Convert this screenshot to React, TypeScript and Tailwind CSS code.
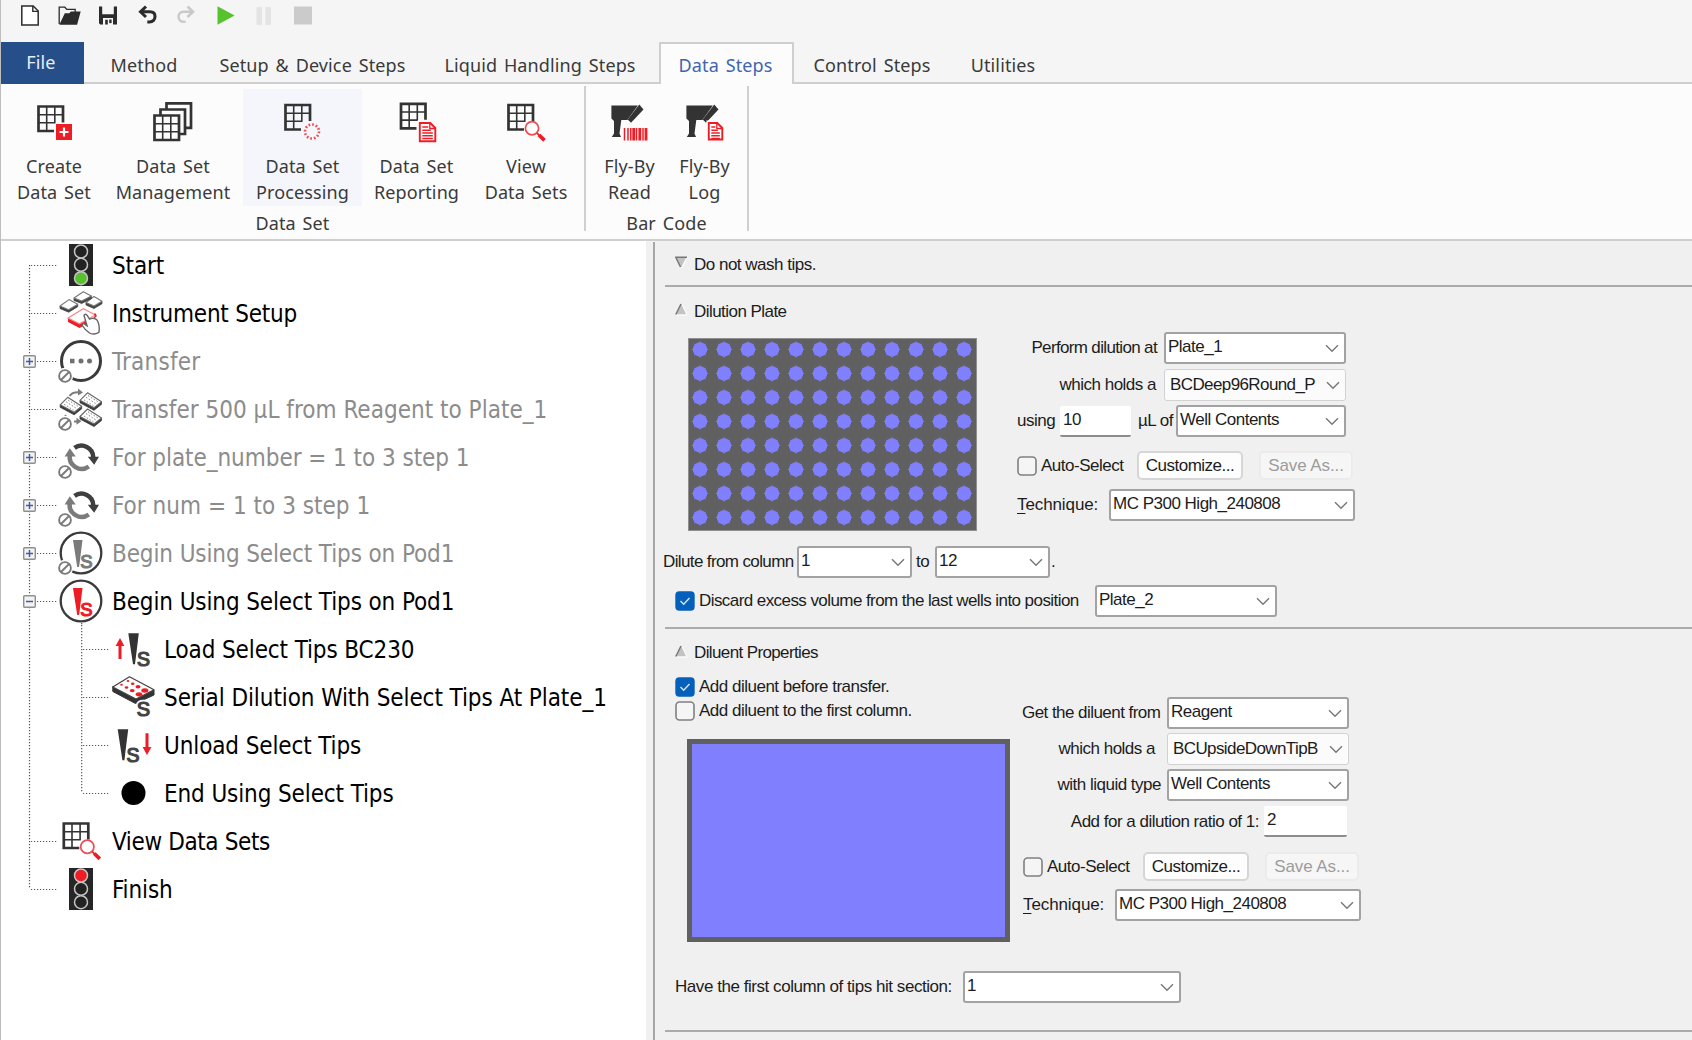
import React from "react";

type Kids = { children?: React.ReactNode };

/* ---------- quick access toolbar ---------- */

const QuickIcon = ({ children }: Kids) => (
  <svg width="24" height="24" viewBox="0 0 24 24" fill="none">
    {children}
  </svg>
);

function QuickBar() {
  return (
    <div className="flex h-[42px] items-start gap-[15px] pl-[17px] pt-[3px]">
      <QuickIcon>
        <path d="M3.8 3h11.4l5 5v14H3.8z" stroke="#2b2b2b" strokeWidth="1.5" fill="#fff" />
        <path d="M14.8 3v5.4h5.4" stroke="#2b2b2b" strokeWidth="1.4" />
      </QuickIcon>
      <QuickIcon>
        <path d="M2.2 21V4.2h5.6l2 2.2h8.4v3.2" stroke="#2b2b2b" strokeWidth="1.3" />
        <path d="M7.800 10.2h4.6l1.4-1.7h9.9L20.100 21.7H2.300z" fill="#2b2b2b" />
      </QuickIcon>
      <QuickIcon>
        <path fillRule="evenodd" fill="#2b2b2b" d="M3 3.5h18v18H4.2L3 20.3zM6.2 3.5v7.8h11.6V3.5zM7 15v6.5h2.2V16.8h2.6v4.7H17V15z" />
        <path d="M13.2 16.5h2.4v3.6h-2.4z" fill="#2b2b2b" />
      </QuickIcon>
      <QuickIcon>
        <path d="M11 3.5 5.500 8.8l5.5 5.2" stroke="#2b2b2b" strokeWidth="3" />
        <path d="M6 8.8h9c3.5 0 5 2.2 5 4.8 0 3-2 5.3-5.5 5.3h-2.2" stroke="#2b2b2b" strokeWidth="3" />
      </QuickIcon>
      <QuickIcon>
        <path d="M13.5 3.5 19 8.8 13.5 14" stroke="#c9c9c9" strokeWidth="2.6" />
        <path d="M18.5 8.8h-9c-3.500 0-5 2.200-5 4.800 0 3 2 5.300 5.500 5.300h1.700" stroke="#c9c9c9" strokeWidth="2.4" />
      </QuickIcon>
      <QuickIcon>
        <path d="M4.5 3.300v18.400L21.600 12.500z" fill="#57c22d" />
      </QuickIcon>
      <QuickIcon>
        <path d="M4.500 4H10v18H4.500zM13.500 4H19v18h-5.500z" fill="#e4e4e4" />
      </QuickIcon>
      <QuickIcon>
        <path d="M3 3.500h18v18H3z" fill="#cbcbcb" />
      </QuickIcon>
    </div>
  );
}

/* ---------- tabs ---------- */

function Tabs() {
  const rib = "flex h-[42px] items-center justify-center border-b-2 border-[#cfcfcf] pt-[7px] whitespace-nowrap";
  return (
    <div className="flex h-[42px] text-[18px] tracking-[0.12px] [word-spacing:2px] text-[#3a3a3a]">
      <div className="flex w-[83px] items-center justify-center bg-[#264f89] pb-0.5 pr-[3px] text-[#e8eef8]">File</div>
      <div className={`${rib} w-[120px]`}>Method</div>
      <div className={`${rib} w-[217px]`}>Setup &amp; Device Steps</div>
      <div className={`${rib} w-[238px]`}>Liquid Handling Steps</div>
      <div className="flex h-[42px] w-[135px] items-center justify-center border-x-2 border-t-2 border-[#cfcfcf] bg-[#fcfcfc] pr-[2px] pt-[3px] whitespace-nowrap text-[#3f65b0]">
        Data Steps
      </div>
      <div className={`${rib} w-[156px]`}>Control Steps</div>
      <div className={`${rib} w-[106px]`}>Utilities</div>
      <div className={`${rib} grow`} />
    </div>
  );
}

/* ---------- ribbon icons ---------- */

const RED = "#ee1c25";

const Table = ({ x = 0, y = 0 }: { x?: number; y?: number }) => (
  <g transform={`translate(${x} ${y})`} stroke="#333" fill="none">
    <path d="M25.500 17V1H1v24.500h15.500" strokeWidth="2.700" />
    <path d="M9.200 1v24M17.300 1v16.500M1 9.200h24.500M1 17.300h17" strokeWidth="1.600" />
  </g>
);

const StackedTables = () => (
  <g stroke="#333" strokeWidth="2.700" fill="#fcfcfc">
    <path d="M13.500 1.300H38v24.500H13.500z" />
    <path d="M7.500 7.500H32V32H7.500z" />
    <path d="M1.500 13.500H26V38H1.500z" />
    <path d="M9.700 13.500V38M17.800 13.500V38M1.500 21.700H26M1.500 29.800H26" strokeWidth="1.600" />
  </g>
);

const Lens = () => (
  <>
    <circle cx="26" cy="26.300" r="6.600" fill="#fff" stroke="#f04a50" strokeWidth="1.700" />
    <path d="m31 31.200 2.500 2.500" stroke={RED} strokeWidth="1.700" />
    <path d="m33 33 5.500 5.300" stroke={RED} strokeWidth="3.800" />
  </>
);

const Sheet = ({ x, y, w, h }: { x: number; y: number; w: number; h: number }) => (
  <g transform={`translate(${x} ${y})`} stroke={RED} fill="none">
    <path d={`M0 0h${w - 5}l5 5v${h - 5}H0z`} fill="#fff" strokeWidth="1.900" />
    <path d={`M${w - 5.5} 0v5.500h5.500`} strokeWidth="1.300" />
    <path d={`M2.500 4h${w - 9.5}M2.500 7.200h${w - 7}M2.500 10h${w - 5}M2.500 12.800h${w - 5}M2.500 15.500h${w - 5}`} strokeWidth="1.400" />
  </g>
);

const Scanner = () => (
  <g fill="#333">
    <path d="M1.400 3.500h26.500L17.300 18H11.300L9.500 31.500l1.500 3.500H1.800l2.200-3.500V19L1.400 16.500z" />
    <path d="m29.300 2.600 4.200 5L21 20.700l-3.300-3.100z" />
  </g>
);

const Glyph = ({ children }: Kids) => (
  <svg width="40" height="42" viewBox="0 0 40 42" className="mb-[9px] block">
    {children}
  </svg>
);

function RibbonButton({ icon, top, bottom, box }: { icon: React.ReactNode; top: string; bottom: string; box: string }) {
  return (
    <div className={`flex h-[117px] flex-col items-center pt-[13px] text-center leading-[26px] whitespace-nowrap ${box}`}>
      <Glyph>{icon}</Glyph>
      <div>{top}</div>
      <div>{bottom}</div>
    </div>
  );
}

function Ribbon() {
  return (
    <div className="flex h-[157px] border-b-2 border-[#cfcfcf] bg-[#fcfcfc] pt-[2px] text-[18px] tracking-[0.12px] [word-spacing:2px] text-[#3a3a3a]">
      <div className="flex h-[145px] w-[585px] flex-col border-r-2 border-[#d0d0d0] pt-[3px]">
        <div className="flex">
          <RibbonButton
            box="w-[106px]"
            top="Create"
            bottom="Data Set"
            icon={
              <>
                <Table x={3.5} y={3.5} />
                <path d="M22 22h16v16H22z" fill={RED} />
                <path d="M30 25.500v9M25.500 30h9" stroke="#fff" strokeWidth="2.200" />
              </>
            }
          />
          <RibbonButton box="w-[132px]" top="Data Set" bottom="Management" icon={<StackedTables />} />
          <RibbonButton
            box="ml-[4px] w-[119px] bg-[#f4f6fb]"
            top="Data Set"
            bottom="Processing"
            icon={
              <>
                <Table x={1.5} y={2} />
                <circle cx="29" cy="29.500" r="7" fill="none" stroke="#f24a50" strokeWidth="2.600" strokeDasharray="1.700 1.960" />
              </>
            }
          />
          <RibbonButton
            box="w-[109px]"
            top="Data Set"
            bottom="Reporting"
            icon={
              <>
                <Table x={3} y={0.8} />
                <path d="M20.500 18.500h20v24h-20z" fill="#fcfcfc" />
                <Sheet x={22.8} y={21} w={15.5} h={18.2} />
              </>
            }
          />
          <RibbonButton box="w-[110px]" top="View" bottom="Data Sets" icon={<><Table x={1.5} y={2} /><Lens /></>} />
        </div>
        <div className="text-center leading-[34px]">Data Set</div>
      </div>
      <div className="flex h-[145px] w-[163px] flex-col border-r-2 border-[#d0d0d0] pt-[3px]">
        <div className="flex pl-[6px]">
          <RibbonButton
            box="w-[75px]"
            top="Fly-By"
            bottom="Read"
            icon={
              <>
                <Scanner />
                <path d="M13 25h24.500v13.500H13z" fill="#fcfcfc" />
                <path d="M14.500 26v12.500M18 26v12.500M20.800 26v12.500M26.500 26v12.500M33 26v12.500" stroke={RED} strokeWidth="1.500" />
                <path d="M23.700 26v12.500M29.800 26v12.500M36 26v12.500" stroke={RED} strokeWidth="2.800" />
              </>
            }
          />
          <RibbonButton
            box="w-[75px]"
            top="Fly-By"
            bottom="Log"
            icon={
              <>
                <Scanner />
                <path d="M21.500 18.500h18v21h-18z" fill="#fcfcfc" />
                <Sheet x={23.8} y={21} w={13.5} h={16.5} />
              </>
            }
          />
        </div>
        <div className="text-center leading-[34px]">Bar Code</div>
      </div>
    </div>
  );
}

/* ---------- method tree ---------- */

const Banned = () => (
  <g>
    <circle cx="6" cy="37" r="8.200" fill="#fff" />
    <circle cx="6" cy="37" r="5.900" fill="none" stroke="#7b7b7b" strokeWidth="1.900" />
    <path d="m2 41 8-8" stroke="#7b7b7b" strokeWidth="1.900" />
  </g>
);

const TrafficLight = ({ lit }: { lit: "go" | "stop" }) => (
  <g>
    <path d="M10 1h24v42H10z" fill="#262626" />
    {[8.5, 21.8, 35.2].map((cy, i) => {
      const on = (lit === "go" && i === 2) || (lit === "stop" && i === 0);
      return (
        <circle
          key={cy}
          cx="22"
          cy={cy}
          r="6.500"
          fill={on ? (lit === "go" ? "#57c22d" : RED) : "#222"}
          stroke="#c4c4c4"
          strokeWidth="1.500"
        />
      );
    })}
  </g>
);

const Letter = ({ x, y, fill, size = 20 }: { x: number; y: number; fill: string; size?: number }) => (
  <text x={x} y={y} fontSize={size} fill={fill} stroke={fill} strokeWidth="1.200" letterSpacing="0" fontFamily="Liberation Sans, Arial, sans-serif">
    S
  </text>
);

const Tile = ({ p, side = "#444", edge = "#777" }: { p: number[]; side?: string; edge?: string }) => (
  <g strokeLinejoin="round">
    <path d={`M${p[0]} ${p[1]}V${p[1] + 2.5}L${p[6]} ${p[7] + 2.5}L${p[4]} ${p[5] + 2.5}V${p[5]}L${p[6]} ${p[7]}z`} fill={side} stroke={side} strokeWidth="0.800" />
    <path d={`M${p[0]} ${p[1]}L${p[2]} ${p[3]}L${p[4]} ${p[5]}L${p[6]} ${p[7]}z`} fill="#fff" stroke={edge} strokeWidth="1.100" />
  </g>
);

const PlateTile = ({ x, y }: { x: number; y: number }) => (
  <g transform={`translate(${x} ${y})`}>
    <Tile p={[0, 7.5, 7.5, 0, 21.5, 9, 14, 15]} side="#3a3a3a" edge="#666" />
    <path d="m6 4.500 10 6.500M4 7l9.500 6M8 2.800l10 6.200" stroke="#777" strokeWidth="0.900" strokeDasharray="1.500 1.800" />
  </g>
);

const SetupIcon = () => (
  <g>
    <Tile p={[1, 15, 10, 8.6, 18.7, 13.2, 9.7, 18.7]} />
    <Tile p={[27, 11.5, 35, 5.5, 43, 10.3, 35, 15]} />
    <Tile p={[15, 7, 24.3, 0.8, 32.3, 5, 22.7, 10]} />
    <path d="M9 27v4l11.500 6 8-4V28L20.500 32.500z" fill={RED} />
    <path d="M9 27 24.300 17.800 36.500 24 20.500 32.800z" fill="#fff" stroke="#f5878b" strokeWidth="1.200" />
    <path d="M35.500 22.500 37 25l-2 2" stroke={RED} strokeWidth="1.500" fill="none" />
    <path
      d="M25 24.500c.5-1.700 2.500-1.500 3.200 0l2.300 3.600c3-1.500 7-.6 8 1.600 1.500 3 2 8 1.500 11.500-2.500 2.200-7.500 2.200-9.500.8-2-1.300-6-5.500-7.200-7.500-.6-1.600 1.800-2.400 3.400-.6l1.400.9z"
      fill="#fff"
      stroke="#666"
      strokeWidth="1.400"
    />
  </g>
);

const LoopIcon = () => (
  <g fill="none" strokeWidth="4.500">
    <path d="M15.500 12.800A12 12 0 0 1 34.300 22.500" stroke="#3f3f3f" />
    <path d="M29.800 31.500A12 12 0 0 1 10.800 20" stroke="#7b7b7b" />
    <path d="M28.800 21.800H40l-4.800 8z" fill="#3f3f3f" />
    <path d="M5.600 21.500h11.200L10.800 13.300z" fill="#7b7b7b" />
    <Banned />
  </g>
);

const TipCircle = ({ color }: { color: string }) => (
  <g>
    <circle cx="22" cy="22" r="20.300" fill="#fff" stroke="#3b3b3b" strokeWidth="2.300" />
    <path d="M14 9h9.500l-2.600 21-.9 6h-1.800z" fill={color} />
    <Letter x={21.3} y={36.8} fill={color} size={18.5} />
  </g>
);

const Needle = ({ x }: { x: number }) => (
  <g>
    <path d={`M${x} 6.300h10.500l-3.800 31h-2z`} fill="#333" />
    <Letter x={x + 8.7} y={38.8} fill="#444" size={19.5} />
  </g>
);

const SerialIcon = () => (
  <g>
    <path d="M1.800 11.500v5L24.500 28.500l18.500-8.500v-5L25 24z" fill="#333" stroke="#333" strokeLinejoin="round" />
    <path d="M18.500 1.800 43 14.800 25 24 1.800 12z" fill="#fff" stroke="#444" strokeWidth="1.300" strokeLinejoin="round" />
    <g fill={RED}>
      <ellipse cx="17" cy="6" rx="1.300" ry="1" />
      <ellipse cx="21.700" cy="8.700" rx="1.800" ry="1.300" />
      <ellipse cx="27" cy="11.800" rx="2.500" ry="1.700" />
      <ellipse cx="33.800" cy="15.500" rx="3.500" ry="2.200" />
      <ellipse cx="10.500" cy="9.800" rx="1.300" ry="1" />
      <ellipse cx="15.500" cy="12.500" rx="1.800" ry="1.300" />
      <ellipse cx="21.200" cy="15.600" rx="2.500" ry="1.700" />
      <ellipse cx="28" cy="19.300" rx="3.300" ry="2.100" />
    </g>
    <text x="25.800" y="41" fontSize="20" fill="#444" stroke="#fff" strokeWidth="4.500" paintOrder="stroke" fontFamily="Liberation Sans, Arial, sans-serif">
      S
    </text>
    <Letter x={25.8} y={41} fill="#444" size={20} />
  </g>
);

type Row = { label: string; icon: React.ReactNode; dim?: boolean; box?: "+" | "-"; child?: boolean; fit?: string };

const rows: Row[] = [
  { label: "Start", icon: <TrafficLight lit="go" /> },
  { label: "Instrument Setup", fit: "tracking-[-0.22px]", icon: <SetupIcon /> },
  {
    label: "Transfer",
    dim: true,
    box: "+",
    fit: "tracking-[0.25px]",
    icon: (
      <g>
        <circle cx="22" cy="22" r="19.500" fill="#fff" stroke="#3b3b3b" strokeWidth="3" />
        <path d="M11 19.800h4.500v4.500H11z" fill="#707070" />
        <circle cx="22" cy="22" r="2.500" fill="#707070" />
        <circle cx="30.500" cy="22" r="2.500" fill="#707070" />
        <Banned />
      </g>
    ),
  },
  {
    label: "Transfer 500 µL from Reagent to Plate_1",
    dim: true,
    fit: "tracking-[0.02px]",
    icon: (
      <g>
        <PlateTile x={1.2} y={10.3} />
        <PlateTile x={21} y={5.8} />
        <PlateTile x={21} y={22} />
        <path d="M10.500 9c2-3.200 5-4 9.500-3.800M6 28l2 3M15 34.500h5" stroke="#7b7b7b" strokeWidth="2" fill="none" />
        <path d="M19 1.500v7l5-3zM17.500 30.800v7l5-3.500z" fill="#7b7b7b" />
        <Banned />
      </g>
    ),
  },
  { label: "For plate_number = 1 to 3 step 1", dim: true, box: "+", fit: "tracking-[-0.05px]", icon: <LoopIcon /> },
  { label: "For num = 1 to 3 step 1", dim: true, box: "+", fit: "tracking-[0.02px]", icon: <LoopIcon /> },
  { label: "Begin Using Select Tips on Pod1", dim: true, box: "+", icon: <><TipCircle color="#7b7b7b" /><Banned /></> },
  { label: "Begin Using Select Tips on Pod1", box: "-", icon: <TipCircle color={RED} /> },
  {
    label: "Load Select Tips BC230",
    child: true,
    icon: (
      <g>
        <path d="M9 11 4.600 19h2.900v13h3V19h2.900z" fill={RED} />
        <Needle x={17.3} />
      </g>
    ),
  },
  { label: "Serial Dilution With Select Tips At Plate_1", child: true, fit: "tracking-[-0.08px]", icon: <SerialIcon /> },
  {
    label: "Unload Select Tips",
    child: true,
    icon: (
      <g>
        <Needle x={6.7} />
        <path d="m36 32-4.400-8h2.900V10.300h3V24h2.900z" fill={RED} />
      </g>
    ),
  },
  { label: "End Using Select Tips", child: true, icon: <circle cx="22.500" cy="22" r="12" fill="#000" /> },
  { label: "View Data Sets", fit: "tracking-[-0.38px]", icon: <g transform="translate(2.300 1.500)"><Table x={1.5} y={2} /><Lens /></g> },
  { label: "Finish", icon: <TrafficLight lit="stop" /> },
];

const Dots = ({ children }: Kids) => (
  <svg width="110" height="48" className="absolute left-0 top-0" stroke="#555" strokeWidth="1.200" strokeDasharray="1.200 1.800" fill="none">
    {children}
  </svg>
);

function TreeRow({ row, index }: { row: Row; index: number }) {
  const last = index === rows.length - 1;
  return (
    <div className={`relative flex h-12 items-center ${row.child ? "pl-[110px]" : "pl-[58px]"}`}>
      <Dots>
        <path d={`M28.500 ${index === 0 ? 24 : 0}V${last ? 24 : 48}`} />
        {!row.child && <path d={row.box ? "M36 24.500H57" : "M30 24.500H57"} />}
        {row.child && <path d={`M80.700 0V${row.label.startsWith("End") ? 24 : 48}M82 24.500H109`} />}
        {row.box === "-" && <path d="M80.700 43V48" />}
      </Dots>
      {row.box && (
        <svg width="13" height="13" className="absolute left-[22px] top-[18px]">
          <rect x="0.700" y="0.700" width="11.600" height="11.600" rx="1" fill="#f2f2f2" stroke="#8f8f8f" strokeWidth="1.400" />
          <path d={row.box === "+" ? "M3 6.500h7M6.500 3v7" : "M3 6.500h7"} stroke="#3f5f9f" strokeWidth="1.500" />
        </svg>
      )}
      <svg width="44" height="44" viewBox="0 0 44 44" className="relative shrink-0 overflow-visible">
        {row.icon}
      </svg>
      <span className={`ml-[9px] pt-px whitespace-nowrap ${row.dim ? "text-[#8c8c8c]" : "text-black"} ${row.fit ?? "tracking-[-0.12px]"}`}>
        {row.label}
      </span>
    </div>
  );
}

/* ---------- form controls ---------- */

const Select = ({ value, box, flat = false }: { value: string; box: string; flat?: boolean }) => (
  <div
    className={`flex h-[32px] shrink-0 items-center justify-between overflow-hidden rounded-[3px] pr-[5px] ${
      flat ? "border border-[#d2d2d2] bg-[#fbfbfb] pl-[5px] tracking-[-0.6px]" : "border-2 border-[#a2a2a2] bg-white pb-[3px] pl-[2px]"
    } ${box}`}
  >
    <span className="whitespace-nowrap">{value}</span>
    <svg width="14" height="9" viewBox="0 0 14 9" fill="none" className={flat ? "" : "mt-[3px]"}>
      <path d="m1 1.200 6 6 6-6" stroke="#7a7a7a" strokeWidth="1.500" />
    </svg>
  </div>
);

const Input = ({ value, box }: { value: string; box: string }) => (
  <div className={`flex h-[31px] shrink-0 items-center rounded-[2px] border-b-2 border-[#8c8c8c] bg-white pb-[1px] ${box}`}>{value}</div>
);

const Check = ({ on = false }: { on?: boolean }) =>
  on ? (
    <svg width="20" height="20" viewBox="0 0 20 20" className="shrink-0">
      <rect x="0.300" y="0.300" width="19.400" height="19.400" rx="4" fill="#0560bb" />
      <path d="m5.500 10 3.200 3.200 5.800-6.200" stroke="#d6e6f7" strokeWidth="1.400" fill="none" />
    </svg>
  ) : (
    <svg width="20" height="20" viewBox="0 0 20 20" className="shrink-0">
      <rect x="1" y="1" width="18" height="18" rx="3.500" fill="#f5f5f5" stroke="#808080" strokeWidth="1.600" />
    </svg>
  );

const Button = ({ label, box, off = false }: { label: string; box: string; off?: boolean }) => (
  <div
    className={`flex h-[29px] shrink-0 items-center justify-center rounded-[5px] border-2 ${
      off ? "border-[#ebebeb] bg-[#f6f6f6] text-[#9c9c9c]" : "border-[#d6d6d6] bg-[#fdfdfd]"
    } ${box}`}
  >
    {label}
  </div>
);

const Title = ({ label, open, box }: { label: string; open: boolean; box: string }) => (
  <div className={`flex items-center pl-[20px] ${box}`}>
    <svg width="13" height="13" viewBox="0 0 13 13" className="mr-[6px] mb-[4px]">
      {open ? (
        <>
          <path d="M6.500 1 11.500 11.500H1z" fill="#c3c3c3" />
          <path d="M1 12h11L7 1.500" stroke="#fff" fill="none" />
          <path d="M.8 11.500 6 1" stroke="#777" strokeWidth="1.500" />
        </>
      ) : (
        <>
          <path d="M.5 1h11L6 11.500z" fill="#c3c3c3" />
          <path d="M12 1.500 6.800 12" stroke="#fff" />
          <path d="M12 1.200H.8L5.500 11" stroke="#777" strokeWidth="1.500" fill="none" />
        </>
      )}
    </svg>
    {label}
  </div>
);

const Divider = () => <div className="ml-[10px] h-[2px] shrink-0 bg-[#ababab]" />;

const Label = ({ box, children }: Kids & { box: string }) => <div className={`shrink-0 whitespace-nowrap ${box}`}>{children}</div>;

const AutoSelectRow = () => (
  <div className="flex items-center">
    <Check />
    <Label box="ml-[4px] w-[96px]">Auto-Select</Label>
    <Button label="Customize..." box="w-[106px]" />
    <Button label="Save As..." box="ml-[16px] w-[94px] tracking-[-0.1px]" off />
  </div>
);

const TechniqueRow = () => (
  <div className="flex items-center">
    <Label box="w-[92px] tracking-[-0.1px]">
      <span className="underline underline-offset-[3px]">T</span>echnique:
    </Label>
    <Select value="MC P300 High_240808" box="w-[246px]" />
  </div>
);

function WellPlate() {
  return (
    <svg width="289" height="193" viewBox="0 0 289 193" className="shrink-0">
      <rect x="0.500" y="0.500" width="288" height="192" fill="#606060" stroke="#8f8f8f" />
      {Array.from({ length: 96 }, (_, i) => {
        const cx = 12 + (i % 12) * 24;
        const cy = 11.5 + Math.floor(i / 12) * 24;
        return (
          <g key={i} fill="#8080ff">
            <circle cx={cx} cy={cy} r="7.200" />
            <path
              d={`M${cx - 8} ${cy}h16M${cx} ${cy - 8}v16M${cx - 5.5} ${cy - 5.5}l11 11M${cx + 5.5} ${cy - 5.5}l-11 11`}
              stroke="#8080ff"
              strokeWidth="1.200"
            />
          </g>
        );
      })}
    </svg>
  );
}

function Details() {
  return (
    <div className="flex min-w-0 grow flex-col bg-[#f0f0f0] font-['Liberation_Sans',Arial,sans-serif] text-[17px] leading-[20px] tracking-[-0.5px] text-[#1c1c1c]">
      <Title label="Do not wash tips." open={false} box="h-[44px] pt-[3px]" />
      <Divider />
      <Title label="Dilution Plate" open box="h-[49px] tracking-[-0.55px]" />

      <div className="mt-[2px] flex h-[203px] pl-[33px]">
        <WellPlate />
        <div className="ml-[40px] mt-[-6px] flex flex-col">
          <div className="flex items-center">
            <Label box="w-[147px] pr-[7px] text-right tracking-[-0.65px]">Perform dilution at</Label>
            <Select value="Plate_1" box="w-[182px]" />
          </div>
          <div className="mt-[5px] flex items-center">
            <Label box="w-[147px] pr-[8px] text-right">which holds a</Label>
            <Select value="BCDeep96Round_P" box="w-[182px]" flat />
          </div>
          <div className="mt-[4px] flex items-center">
            <Label box="w-[43px]">using</Label>
            <Input value="10" box="w-[71px] pl-[3px]" />
            <Label box="w-[45px] pl-[7px]">µL of</Label>
            <Select value="Well Contents" box="w-[170px]" />
          </div>
          <div className="mt-[14px]">
            <AutoSelectRow />
          </div>
          <div className="mt-[9px]">
            <TechniqueRow />
          </div>
        </div>
      </div>

      <div className="mt-[5px] flex items-center pl-[8px]">
        <Label box="w-[134px] tracking-[-0.62px]">Dilute from column</Label>
        <Select value="1" box="w-[115px]" />
        <Label box="w-[23px] pl-[4px]">to</Label>
        <Select value="12" box="w-[115px]" />
        <Label box="pl-[1px]">.</Label>
      </div>
      <div className="mt-[7px] flex items-center pl-[20px]">
        <Check on />
        <Label box="ml-[4px] w-[396px] tracking-[-0.57px]">Discard excess volume from the last wells into position</Label>
        <Select value="Plate_2" box="w-[182px]" />
      </div>

      <div className="h-[10px]" />
      <Divider />
      <Title label="Diluent Properties" open box="h-[46px] pt-[2px] tracking-[-0.62px]" />

      <div className="flex pl-[20px]">
        <div className="flex w-[347px] flex-col">
          <div className="flex h-[24px] items-center">
            <Check on />
            <Label box="ml-[4px]">Add diluent before transfer.</Label>
          </div>
          <div className="flex h-[24px] items-center">
            <Check />
            <Label box="ml-[4px]">Add diluent to the first column.</Label>
          </div>
          <div className="ml-[12px] mt-[16px] h-[203px] w-[323px] border-[5px] border-[#606060] bg-[#8080ff]" />
        </div>
        <div className="mt-[22px] flex flex-col">
          <div className="flex items-center">
            <Label box="w-[145px] pr-[7px] text-right tracking-[-0.55px]">Get the diluent from</Label>
            <Select value="Reagent" box="w-[182px]" />
          </div>
          <div className="mt-[4px] flex items-center">
            <Label box="w-[145px] pr-[12px] text-right">which holds a</Label>
            <Select value="BCUpsideDownTipB" box="w-[182px]" flat />
          </div>
          <div className="mt-[4px] flex items-center">
            <Label box="w-[145px] pr-[6px] text-right">with liquid type</Label>
            <Select value="Well Contents" box="w-[182px]" />
          </div>
          <div className="mt-[5px] flex items-center">
            <Label box="w-[242px] pr-[5px] text-right">Add for a dilution ratio of 1:</Label>
            <Input value="2" box="w-[83px] pl-[3px]" />
          </div>
          <div className="mt-[15px] pl-px">
            <AutoSelectRow />
          </div>
          <div className="mt-[8px] pl-px">
            <TechniqueRow />
          </div>
        </div>
      </div>

      <div className="mt-[29px] flex items-center pl-[20px]">
        <Label box="w-[288px] tracking-[-0.45px]">Have the first column of tips hit section:</Label>
        <Select value="1" box="w-[218px]" />
      </div>
      <div className="h-[27px]" />
      <Divider />
    </div>
  );
}

export default function App() {
  return (
    <div className="flex h-[1040px] w-[1692px] flex-col overflow-hidden border-l border-[#bdbdbd] bg-[#f5f5f5] font-['Noto_Sans','Open_Sans',sans-serif]">
      <QuickBar />
      <Tabs />
      <Ribbon />
      <div className="flex min-h-0 grow">
        <div className="w-[645px] shrink-0 bg-white font-['DejaVu_Sans_Condensed','DejaVu_Sans',sans-serif] text-[24px] leading-[30px]">
          {rows.map((row, i) => (
            <TreeRow key={i} row={row} index={i} />
          ))}
        </div>
        <div className="w-[7px] shrink-0 bg-[#f0f0f0]" />
        <div className="mt-px w-[2px] shrink-0 bg-[#a6a6a6]" />
        <Details />
      </div>
    </div>
  );
}
